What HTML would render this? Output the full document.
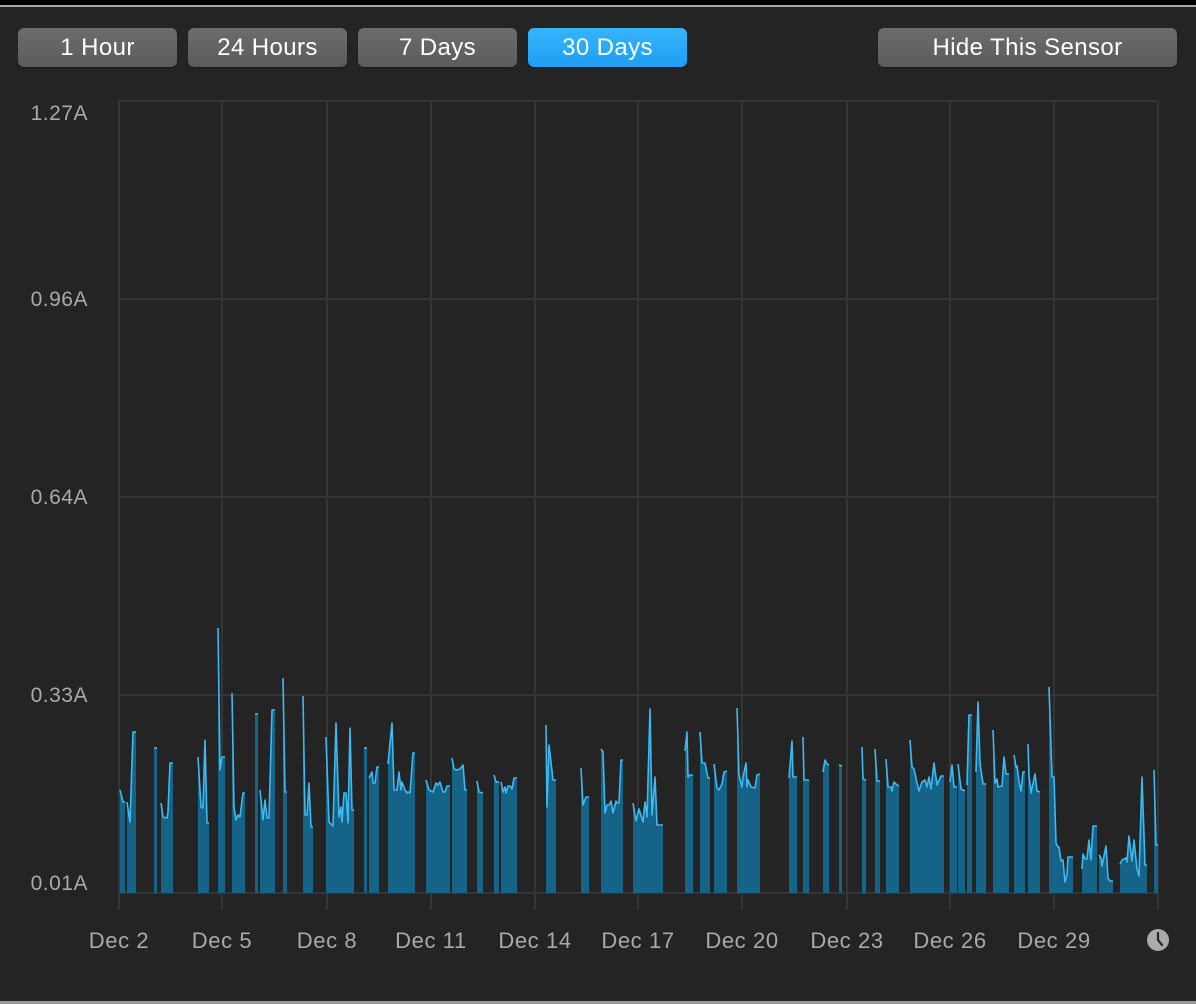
<!DOCTYPE html>
<html><head><meta charset="utf-8"><style>
html,body{margin:0;padding:0;background:#242424;width:1196px;height:1004px;overflow:hidden;font-family:"Liberation Sans",sans-serif}
.top{position:absolute;left:0;top:0;width:1196px;height:5px;background:#000}
.top2{position:absolute;left:0;top:5px;width:1196px;height:2px;background:#a9a9a9}
.bot{position:absolute;left:0;top:1001px;width:1196px;height:3px;background:#9a9a9a}
.btn{position:absolute;top:28px;height:39px;border-radius:6px;background:linear-gradient(#6c6c6c,#5c5c5c);color:#fff;font-size:24px;letter-spacing:0.4px;line-height:39px;text-align:center;box-shadow:0 1px 1px rgba(0,0,0,.4)}
.sel{background:linear-gradient(#36b4fb,#1f9ff3)}
.yl{position:absolute;right:1108px;font-size:21px;letter-spacing:0.5px;color:#a9a9a9;line-height:20px}
.xl{position:absolute;top:928px;width:120px;margin-left:-60px;text-align:center;font-size:22px;letter-spacing:0.6px;color:#a9a9a9}
svg{position:absolute;left:0;top:0}
</style></head><body>
<div class="top"></div><div class="top2"></div><div class="bot"></div>
<div class="btn" style="left:18px;width:159px">1 Hour</div>
<div class="btn" style="left:188px;width:159px">24 Hours</div>
<div class="btn" style="left:358px;width:159px">7 Days</div>
<div class="btn sel" style="left:528px;width:159px">30 Days</div>
<div class="btn" style="left:878px;width:299px">Hide This Sensor</div>
<div class="yl" style="top:104px">1.27A</div>
<div class="yl" style="top:290px">0.96A</div>
<div class="yl" style="top:488px">0.64A</div>
<div class="yl" style="top:686px">0.33A</div>
<div class="yl" style="top:874px">0.01A</div>
<div class="xl" style="left:119px">Dec 2</div>
<div class="xl" style="left:222px">Dec 5</div>
<div class="xl" style="left:327px">Dec 8</div>
<div class="xl" style="left:431px">Dec 11</div>
<div class="xl" style="left:535px">Dec 14</div>
<div class="xl" style="left:638px">Dec 17</div>
<div class="xl" style="left:742px">Dec 20</div>
<div class="xl" style="left:847px">Dec 23</div>
<div class="xl" style="left:950px">Dec 26</div>
<div class="xl" style="left:1054px">Dec 29</div>
<svg width="1196" height="1004" viewBox="0 0 1196 1004">
<g stroke="#353535" stroke-width="2" fill="none">
<path d="M119 101H1158M119 299H1158M119 497H1158M119 695H1158M119 893H1158"/>
<path d="M119 101V910M222 101V910M327 101V910M431 101V910M535 101V910M638 101V910M742 101V910M847 101V910M950 101V910M1054 101V910M1158 101V910"/>
</g>
<g id="d" fill="#156386" stroke="none"></g>
<g id="l" fill="none" stroke="#3db9f2" stroke-width="1.6" stroke-linejoin="round"></g>
<circle cx="1158" cy="940" r="11" fill="#aaaaaa"/>
<path d="M1158 933V940L1162 945" stroke="#242424" stroke-width="2.2" fill="none" stroke-linecap="round"/>
</svg>
<script>
var S=[
"120,790 123,802 125,802","127,802 130,822 133,732 136,732","154,748 157,748",
"161,803 163,817 167,818 168,812 170,763 173,763","198,757 201,807 203,808 205,740 207,823 209,823",
"218,628 220,770 222,757 225,757","232,693 234,807 236,820 238,815 240,817 243,793 245,793",
"255,714 258,714","260,790 263,820 265,800 267,818 269,818 272,710 275,710","283,678 285,792 287,792",
"303,696 305,815 307,815 309,783 311,827 313,827",
"326,737 329,822 333,826 336,723 339,817 341,807 342,822 344,793 346,793 348,823 350,728 352,810 354,810",
"364,748 367,748","369,778 372,772 373,783 375,783 377,767 379,767",
"388,764 392,723 394,790 397,790 399,772 401,790 402,782 405,790 407,793 408,792 410,793 413,753 415,753",
"426,780 429,790 433,792 436,783 438,785 440,782 443,792 445,792 447,786 450,786",
"452,758 454,769 457,770 460,769 463,765 465,790 467,790","477,781 479,792 483,793","494,775 496,782 499,782",
"501,782 503,792 505,787 506,793 508,786 510,786 512,789 514,778 517,778",
"546,725 547,807 549,745 553,780 556,780","581,768 583,805 586,797 589,797",
"601,749 603,752 605,813 607,805 609,805 611,801 613,813 616,801 617,803 619,803 621,760 623,760",
"633,803 636,821 639,809 643,822 645,802 647,817 650,709 652,815 655,777 657,825 663,825",
"685,751 687,732 688,777 690,775 693,775","700,732 702,763 705,763 708,778 710,778",
"714,764 717,788 719,790 722,784 724,772 727,771",
"737,708 739,775 742,787 743,777 746,763 747,787 748,780 751,787 755,788 757,775 760,774",
"789,778 792,741 793,777 797,777","803,737 804,780 809,780","823,772 825,760 827,764 829,765","839,765 842,766",
"862,747 863,779 866,780","875,749 877,781 880,781","886,759 888,787 891,787 892,791 894,782 897,785 899,786",
"910,740 912,767 914,769 917,783 919,791 922,782 925,780 927,787 929,777 931,789 934,763 937,785 941,776 944,776",
"950,782 952,765 954,787 957,787","958,764 961,789 965,791","967,785 969,715 972,715",
"976,772 978,702 980,763 983,784 986,784","993,730 995,783 997,779 998,787 1002,786 1004,757 1006,774 1009,774",
"1014,755 1016,767 1017,766 1019,782 1021,791 1023,772 1025,772","1028,744 1029,775 1031,793 1035,774 1037,791 1040,792",
"1049,687 1052,777 1054,777 1056,843 1058,847 1059,847 1061,861 1063,860 1065,882 1067,874 1068,857 1073,857",
"1082,869 1083,854 1085,859 1087,859 1089,840 1091,860 1093,826 1097,826",
"1099,855 1101,858 1102,866 1106,846 1108,878 1110,881 1113,881",
"1120,864 1122,860 1126,858 1127,862 1129,836 1132,861 1134,840 1137,869 1139,876 1142,777 1145,865 1147,865",
"1154,770 1156,845 1158,845"];
var ns="http://www.w3.org/2000/svg",d=document.getElementById('d'),l=document.getElementById('l');
S.forEach(function(s){var p=s.split(' '),a=p[0].split(','),b=p[p.length-1].split(',');
var g=document.createElementNS(ns,'polygon');g.setAttribute('points',a[0]+',893 '+s+' '+b[0]+',893');d.appendChild(g);
var q=document.createElementNS(ns,'polyline');q.setAttribute('points',s);l.appendChild(q);});
</script>
</body></html>
